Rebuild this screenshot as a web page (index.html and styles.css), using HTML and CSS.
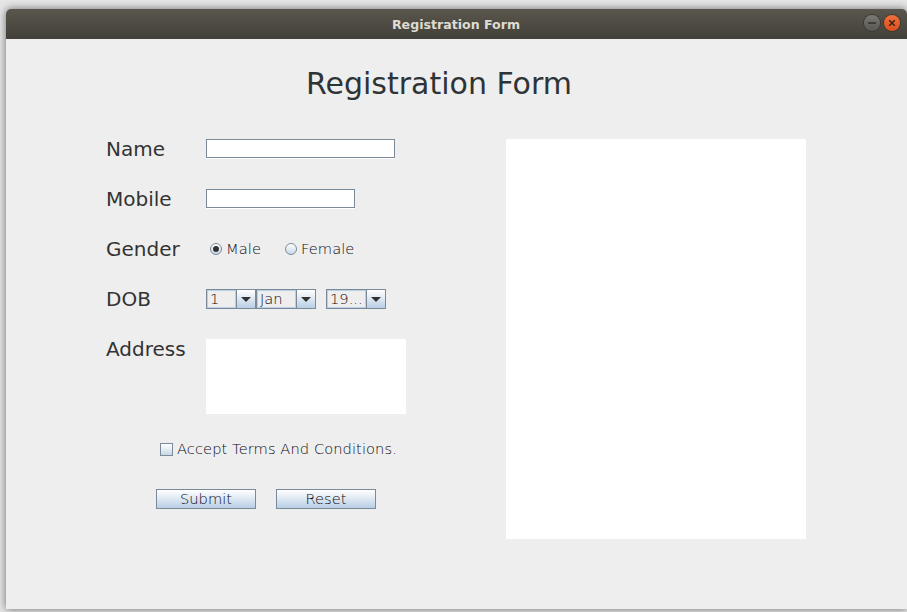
FILE: index.html
```html
<!DOCTYPE html>
<html>
<head>
<meta charset="utf-8">
<title>Registration Form</title>
<link rel="stylesheet" href="styles.css">
</head>
<body>
<div class="window">
	<div class="titlebar">
		<span class="titlebar_text">Registration Form</span>
		<div class="window_buttons">
			<span class="win_btn win_min">
				<svg width="16" height="16" viewBox="0 0 16 16"><path d="M4 8h8" stroke="#2e2d29" stroke-width="1.4"/></svg>
			</span>
			<span class="win_btn win_close">
				<svg width="16" height="16" viewBox="0 0 16 16"><path d="M5.2 5.2l5.6 5.6M10.8 5.2l-5.6 5.6" stroke="#3a2116" stroke-width="1.5"/></svg>
			</span>
		</div>
	</div>
	<div class="content">
		<h1 class="heading">Registration Form</h1>
		<div class="columns">
			<form class="form">
				<div class="row">
					<label class="field_label">Name</label>
					<input class="text_input input_name" type="text">
				</div>
				<div class="row">
					<label class="field_label">Mobile</label>
					<input class="text_input input_mobile" type="text">
				</div>
				<div class="row">
					<label class="field_label">Gender</label>
					<div class="radios">
						<span class="radio_item"><span class="radio radio_on"></span><span class="small_text">Male</span></span>
						<span class="radio_item"><span class="radio"></span><span class="small_text">Female</span></span>
					</div>
				</div>
				<div class="row">
					<label class="field_label">DOB</label>
					<div class="combos">
						<div class="combo combo_day"><span class="combo_value">1</span><span class="combo_arrow"></span></div>
						<div class="combo combo_month"><span class="combo_value">Jan</span><span class="combo_arrow"></span></div>
						<div class="combo combo_year"><span class="combo_value">19...</span><span class="combo_arrow"></span></div>
					</div>
				</div>
				<div class="row row_address">
					<label class="field_label">Address</label>
					<div class="address"></div>
				</div>
				<div class="terms">
					<span class="checkbox"></span><span class="small_text">Accept Terms And Conditions.</span>
				</div>
				<div class="buttons">
					<button class="button" type="button">Submit</button>
					<button class="button" type="button">Reset</button>
				</div>
			</form>
			<div class="preview"></div>
		</div>
	</div>
</div>
</body>
</html>
```

FILE: styles.css
```css
html, body {
	margin: 0;
	height: 100%;
	overflow: hidden;
	background: #e6e6e6;
}

body {
	font-family: "DejaVu Sans", sans-serif;
	color: #333;
}

.window {
	width: 901px;
	height: 600px;
	margin: 9px 0 0 6px;
	border-radius: 5px 5px 0 0;
	background: #eee;
	box-shadow: 0 0 8px rgba(0, 0, 0, 0.55);
}

.titlebar {
	position: relative;
	height: 30px;
	display: flex;
	align-items: center;
	justify-content: center;
	border-radius: 5px 5px 0 0;
	background: linear-gradient(#5a564d, #42403a);
}

.titlebar_text {
	font-size: 12.6px;
	font-weight: bold;
	color: #dfdbd2;
	margin-right: 1px;
}

.window_buttons {
	position: absolute;
	right: 7px;
	top: 6px;
	display: flex;
	gap: 4px;
}

.win_btn {
	width: 16px;
	height: 16px;
	border-radius: 50%;
	display: block;
}

.win_min {
	background: linear-gradient(#7b7a75, #57564f);
	box-shadow: 0 0 0 1px #3a3833;
}

.win_close {
	background: linear-gradient(#f0703c, #db4f1e);
	box-shadow: 0 0 0 1px #3a3833;
}

.content {
	height: 570px;
	box-sizing: border-box;
	padding-top: 27px;
}

.heading {
	margin: 0;
	height: 36px;
	line-height: 36px;
	width: 866px;
	text-align: center;
	font-size: 30px;
	font-weight: normal;
	color: #2e3436;
}

.columns {
	display: flex;
	gap: 100px;
	margin-top: 37px;
	padding-left: 100px;
}

.form {
	width: 300px;
	display: flex;
	flex-direction: column;
}

.row {
	display: flex;
	align-items: flex-start;
	height: 20px;
	margin-bottom: 30px;
}

.row_address {
	height: 75px;
	margin-bottom: 25px;
}

.field_label {
	width: 100px;
	font-size: 20px;
	line-height: 20px;
}

.text_input {
	box-sizing: border-box;
	height: 19px;
	padding: 0;
	border: 1px solid #7a8a99;
	background: #fff;
	box-shadow: 0 1px 0 #fff;
}

.input_name {
	width: 189px;
}

.input_mobile {
	width: 149px;
}

.small_text {
	font-size: 14.67px;
	font-weight: 200;
	letter-spacing: 0.07px;
	color: #0c0812;
	padding-bottom: 2px;
}

.radios {
	display: flex;
	gap: 24px;
	padding-left: 4px;
	height: 20px;
	align-items: center;
}

.radio_item {
	display: flex;
	align-items: center;
	gap: 4px;
}

.radio {
	position: relative;
	box-sizing: border-box;
	width: 12px;
	height: 12px;
	border-radius: 50%;
	border: 1px solid #7a8a99;
	background: linear-gradient(#fff, #c8d8e8);
}

.radio_on:after {
	content: "";
	position: absolute;
	left: 2px;
	top: 2px;
	width: 6px;
	height: 6px;
	border-radius: 50%;
	background: #333;
}

.combos {
	display: flex;
}

.combo {
	box-sizing: border-box;
	height: 20px;
	display: flex;
	border: 1px solid #7a8a99;
	background: #eee;
	font-size: 14.67px;
	font-weight: 200;
	color: #0c0812;
}

.combo_day {
	width: 50px;
}

.combo_month {
	width: 60px;
}

.combo_year {
	width: 60px;
	margin-left: 10px;
}

.combo_value {
	flex: 1;
	box-sizing: border-box;
	min-width: 0;
	padding-left: 2px;
	line-height: 15px;
	white-space: nowrap;
	border: 1px solid #b8cfe5;
}

.combo_arrow {
	position: relative;
	width: 18px;
	border-left: 1px solid #7a8a99;
	background: linear-gradient(#fff, #b8cfe5);
}

.combo_arrow:after {
	content: "";
	position: absolute;
	left: 4px;
	top: 7px;
	border-style: solid;
	border-width: 5px 5px 0 5px;
	border-color: #333 transparent transparent transparent;
}

.address {
	width: 200px;
	height: 75px;
	background: #fff;
}

.terms {
	display: flex;
	align-items: center;
	gap: 4px;
	height: 20px;
	margin-left: 54px;
	white-space: nowrap;
}

.checkbox {
	box-sizing: border-box;
	width: 13px;
	height: 13px;
	border: 1px solid #7a8a99;
	background: linear-gradient(#fff, #c8d8e8);
}

.buttons {
	display: flex;
	gap: 20px;
	margin: 30px 0 0 50px;
}

.button {
	box-sizing: border-box;
	width: 100px;
	height: 20px;
	padding: 0 0 2px;
	border: 1px solid #7a8a99;
	background: linear-gradient(#fff, #b8cfe5);
	font-family: "DejaVu Sans", sans-serif;
	font-size: 14.67px;
	font-weight: 200;
	color: #0c0812;
}

.preview {
	width: 300px;
	height: 400px;
	background: #fff;
}
```
